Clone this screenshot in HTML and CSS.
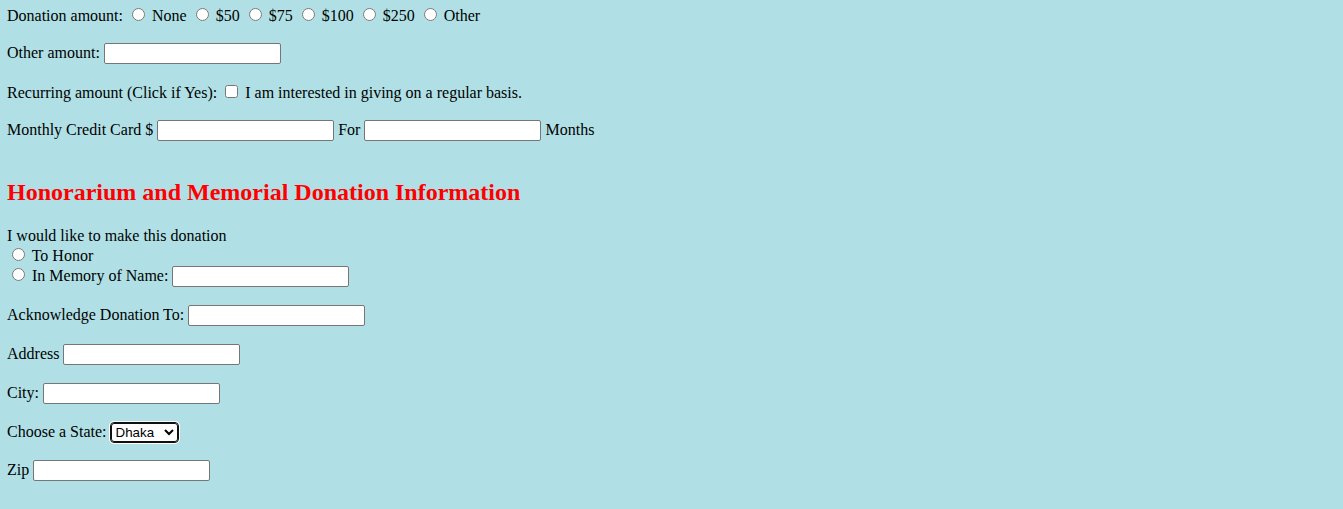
FILE: index.html
```html
<!DOCTYPE html>
<html>
<head>
<meta charset="utf-8">
<link rel="stylesheet" href="styles.css">
</head>
<body>
<form class="form">
  <p class="row first">Donation amount:
    <input type="radio" name="amt"> None
    <input type="radio" name="amt"> $50
    <input type="radio" name="amt"> $75
    <input type="radio" name="amt"> $100
    <input type="radio" name="amt"> $250
    <input type="radio" name="amt"> Other
  </p>
  <p class="row">Other amount: <input type="text" class="txt"></p>
  <p class="row">Recurring amount (Click if Yes): <input type="checkbox"> I am interested in giving on a regular basis.</p>
  <p class="row">Monthly Credit Card $ <input type="text" class="txt"> For <input type="text" class="txt"> Months</p>
  <h2 class="heading">Honorarium and Memorial Donation Information</h2>
  <p class="row">I would like to make this donation<br>
    <input type="radio" name="how"> To Honor<br>
    <input type="radio" name="how"> In Memory of Name: <input type="text" class="txt">
  </p>
  <p class="row">Acknowledge Donation To: <input type="text" class="txt"></p>
  <p class="row">Address <input type="text" class="txt"></p>
  <p class="row">City: <input type="text" class="txt"></p>
  <p class="row">Choose a State: <select class="state"><option>Dhaka</option><option>Chittagong</option></select></p>
  <p class="row">Zip <input type="text" class="txt"></p>
</form>
</body>
</html>
```
FILE: styles.css
```css
body {
  margin: 8px 8px 8px 7px;
  background: #b0e0e6;
  font-family: "Liberation Serif", "Times New Roman", serif;
  font-size: 16px;
  color: #000;
}
.form { margin: 0; }
.row { margin: 18px 0; line-height: 19px; }
.row.first { margin-top: -3px; }
.heading {
  color: #ff0000;
  font-size: 24px;
  font-weight: bold;
  margin: 38px 0 20px;
}
.txt {
  font-family: Arial, "Liberation Sans", sans-serif;
  font-size: 13.333px;
  width: 177px;
  height: 21px;
  box-sizing: border-box;
  padding: 1px 2px;
  border: 1px solid #767676;
  border-radius: 2px;
  background: #fff;
}
.state {
  font-family: "Liberation Sans", Arial, sans-serif;
  font-size: 13.333px;
  width: 67px;
  height: 19px;
  box-sizing: border-box;
  border: 1px solid #101010;
  border-radius: 3px;
  outline: 1px solid #101010;
  box-shadow: 0 0 0 2px #fff;
  background: #fff;
  color: #000;
}
```
